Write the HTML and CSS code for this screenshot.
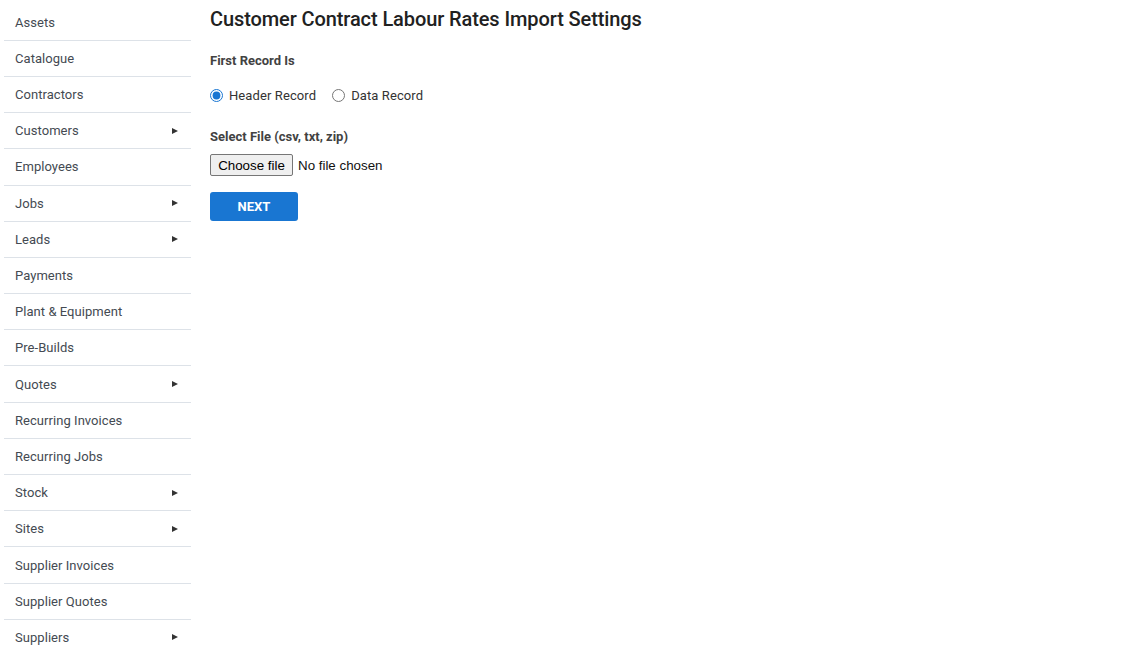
FILE: index.html
```html
<!DOCTYPE html>
<html>
<head>
<meta charset="utf-8">
<link rel="stylesheet" href="styles.css">
</head>
<body>
<div class="layout">
  <nav class="sidebar">
    <div class="item">Assets</div>
    <div class="item">Catalogue</div>
    <div class="item">Contractors</div>
    <div class="item">Customers<span class="arrow"></span></div>
    <div class="item">Employees</div>
    <div class="item">Jobs<span class="arrow"></span></div>
    <div class="item">Leads<span class="arrow"></span></div>
    <div class="item">Payments</div>
    <div class="item">Plant &amp; Equipment</div>
    <div class="item">Pre-Builds</div>
    <div class="item">Quotes<span class="arrow"></span></div>
    <div class="item">Recurring Invoices</div>
    <div class="item">Recurring Jobs</div>
    <div class="item">Stock<span class="arrow"></span></div>
    <div class="item">Sites<span class="arrow"></span></div>
    <div class="item">Supplier Invoices</div>
    <div class="item">Supplier Quotes</div>
    <div class="item">Suppliers<span class="arrow"></span></div>
  </nav>
  <main class="main">
    <h1 class="title">Customer Contract Labour Rates Import Settings</h1>
    <div class="label first">First Record Is</div>
    <div class="radios">
      <label class="radio"><input type="radio" name="rec" checked> Header Record</label>
      <label class="radio"><input type="radio" name="rec"> Data Record</label>
    </div>
    <div class="label second">Select File (csv, txt, zip)</div>
    <div class="file">
      <button class="choose" type="button">Choose file</button>
      <span class="nofile">No file chosen</span>
    </div>
    <button class="next">NEXT</button>
  </main>
</div>
</body>
</html>
```
FILE: styles.css
```css
html, body {
  margin: 0;
  padding: 0;
  background: #fff;
  font-family: Roboto, "Liberation Sans", sans-serif;
}
.layout {
  display: flex;
  padding: 4px;
  gap: 19px;
}
.sidebar {
  width: 187px;
  flex: none;
  display: flex;
  flex-direction: column;
  margin-top: 0.6px;
}
.item {
  display: flex;
  align-items: center;
  justify-content: space-between;
  height: 35.19px;
  padding: 0 13px 0 11px;
  border-bottom: 1px solid #dde2e8;
  font-size: 13px;
  color: #444a52;
  letter-spacing: 0.05px;
  box-sizing: content-box;
}
.arrow {
  width: 0;
  height: 0;
  border-top: 3.5px solid transparent;
  border-bottom: 3.5px solid transparent;
  border-left: 6px solid #333;
}
.main {
  flex: 1;
}
.title {
  margin: 2px 0 0 0;
  font-size: 20px;
  font-weight: 500;
  letter-spacing: -0.1px;
  color: #212121;
  line-height: 26px;
}
.label {
  font-size: 13px;
  font-weight: 700;
  color: #424242;
  line-height: 16px;
}
.first { margin-top: 21px; }
.radios {
  display: flex;
  gap: 16px;
  margin-top: 19px;
  font-size: 13px;
  color: #333;
}
.radio {
  display: flex;
  align-items: center;
  gap: 6px;
  letter-spacing: 0.1px;
}
.radio input {
  margin: 0;
  width: 13px;
  height: 13px;
  accent-color: #1976d2;
}
.second { margin-top: 26px; }
.file {
  margin-top: 9px;
  display: flex;
  align-items: center;
  gap: 5px;
  height: 22px;
}
.choose {
  height: 22px;
  width: 83px;
  padding: 0;
  border: 1px solid #767676;
  border-radius: 2px;
  background: #efefef;
  color: #000;
  font-family: "Liberation Sans", Arial, sans-serif;
  font-size: 13.33px;
}
.nofile {
  font-family: "Liberation Sans", Arial, sans-serif;
  font-size: 13.33px;
  color: #111;
}
.next {
  display: block;
  margin-top: 16px;
  width: 88px;
  height: 29px;
  border: none;
  border-radius: 3px;
  background: #1976d2;
  color: #fff;
  font-family: Roboto, "Liberation Sans", sans-serif;
  font-size: 13px;
  font-weight: 700;
}
```
